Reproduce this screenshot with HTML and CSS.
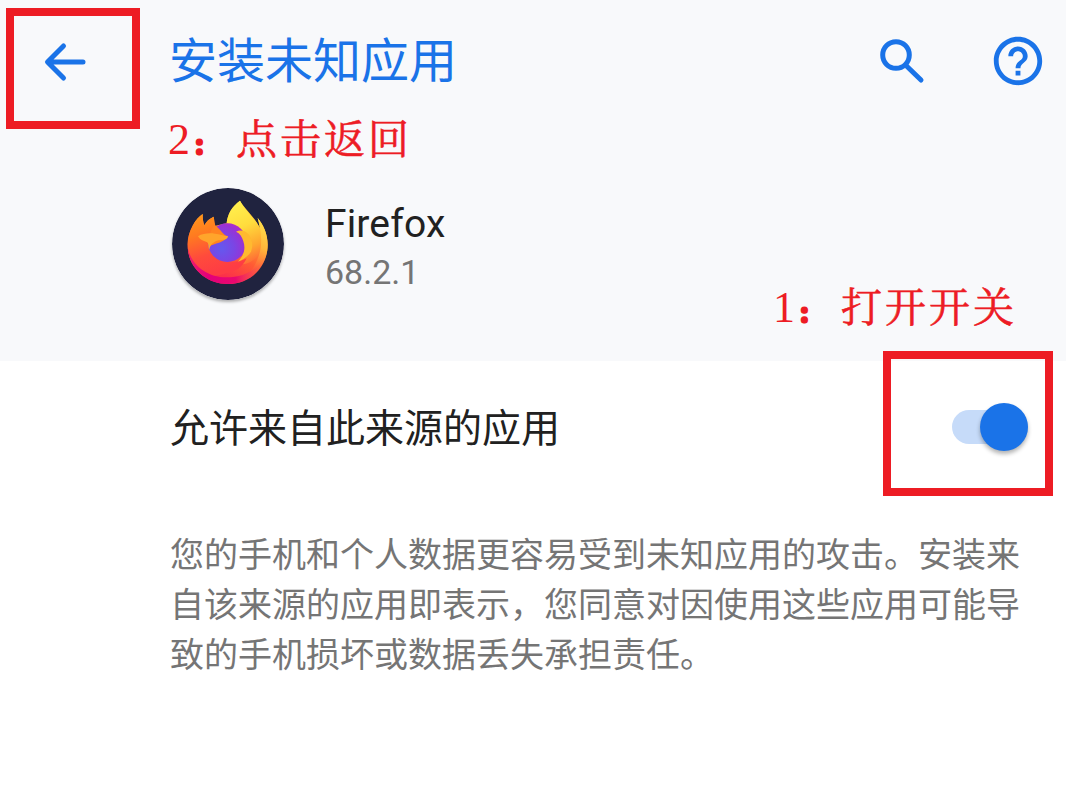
FILE: index.html
```html
<!DOCTYPE html>
<html lang="zh-CN">
<head>
<meta charset="utf-8">
<title>安装未知应用</title>
<link rel="stylesheet" href="styles.css">
</head>
<body>
<div class="screen">
  <header class="header">
    <div class="toolbar">
      <svg class="back" viewBox="0 0 48 48"><path d="M41 25H6.500M21.500 9L5.500 25L21.500 41"/></svg>
      <h1 class="title">安装未知应用</h1>
      <svg class="search" viewBox="0 0 48 48"><circle cx="18" cy="18" r="13.300"/><path class="handle" d="M28 28.500L43 43"/></svg>
      <svg class="help" viewBox="0 0 24 24"><path d="M11 18h2v-2h-2v2zm1-16C6.480 2 2 6.480 2 12s4.480 10 10 10 10-4.480 10-10S17.520 2 12 2zm0 18c-4.410 0-8-3.590-8-8s3.590-8 8-8 8 3.590 8 8-3.590 8-8 8zm0-14c-2.210 0-4 1.790-4 4h2c0-1.100.9-2 2-2s2 .9 2 2c0 2-3 1.750-3 5h2c0-2.250 3-2.500 3-5 0-2.210-1.790-4-4-4z"/></svg>
    </div>
    <div class="app">
      <svg class="app-icon" viewBox="36 24 336 336">
        <defs>
          <linearGradient id="body" x1="0.750" y1="0.050" x2="0.300" y2="1">
            <stop offset="0" stop-color="#ffd13a"/><stop offset="0.300" stop-color="#ffa42c"/><stop offset="0.600" stop-color="#ff5a35"/><stop offset="0.850" stop-color="#fb3149"/><stop offset="1" stop-color="#fb3149"/>
          </linearGradient>
          <linearGradient id="flame" x1="0.350" y1="0" x2="0.600" y2="1">
            <stop offset="0" stop-color="#fff04e"/><stop offset="0.400" stop-color="#ffdc3d"/><stop offset="0.750" stop-color="#ffa52f"/><stop offset="1" stop-color="#ff6937"/>
          </linearGradient>
          <linearGradient id="rim" x1="0.500" y1="0" x2="0.300" y2="1">
            <stop offset="0" stop-color="#ffe04a"/><stop offset="0.450" stop-color="#ffb53a"/><stop offset="1" stop-color="#ff5540" stop-opacity="0"/>
          </linearGradient>
          <linearGradient id="face" x1="0" y1="0" x2="0.300" y2="1">
            <stop offset="0" stop-color="#ff9c18"/><stop offset="0.350" stop-color="#ff7b20"/><stop offset="0.700" stop-color="#ff4b3c"/><stop offset="1" stop-color="#fe3c44"/>
          </linearGradient>
          <linearGradient id="base" gradientUnits="userSpaceOnUse" x1="83" y1="0" x2="323" y2="0">
            <stop offset="0" stop-color="#f0206a"/><stop offset="0.250" stop-color="#e3007b"/><stop offset="0.600" stop-color="#e8086f"/><stop offset="1" stop-color="#ff7a40" stop-opacity="0"/>
          </linearGradient>
          <radialGradient id="globe" cx="0.350" cy="0.650" r="0.750">
            <stop offset="0" stop-color="#6459ee"/><stop offset="0.450" stop-color="#7b45e4"/><stop offset="0.800" stop-color="#9a31d3"/><stop offset="1" stop-color="#b62ac6"/>
          </radialGradient>
        </defs>
        <circle cx="204" cy="192" r="168" fill="#20233f"/>
        <path d="M128 102C108 114 83 153 83 193C83 262 137 312 204 312C271 312 323 261 323 194C323 162 309 132 293 114C297 125 299 134 299 144C285 110 258 93 240 62C216 79 202 103 200 130L162 138L161 110C148 116 139 124 133 136C129 126 128 114 128 102Z" fill="url(#body)"/>
        <path d="M240 62C216 79 202 103 200 130C225 133 244 143 253 159C275 165 282 196 270 215C259 235 245 245 224 252C260 259 288 242 304 211C312 196 313 177 307 160C295 122 257 97 240 62Z" fill="url(#flame)"/>
        <path d="M293 114C309 132 323 162 323 194C323 244 294 279 258 292C294 250 306 211 303 171C303 150 296 131 293 114Z" fill="url(#rim)"/>
        <path d="M128 102C108 114 83 153 83 193C83 230 98 260 121 279C145 291 177 289 198 279C226 278 247 262 260 235C247 243 225 248 199 246C170 242 151 227 149 202L166 137L161 110C148 116 139 124 133 136C129 126 128 114 128 102Z" fill="url(#face)"/>
        <circle cx="202" cy="188" r="58" fill="url(#globe)"/>
        <path d="M162 134L140 180L149 200C155 193 166 192 177 188C188 184 201 178 204 168C188 167 185 148 162 134Z" fill="#ff8420"/>
        <path d="M83 200C91 253 139 292 199 292C257 292 304 266 322 209C316 270 267 312 204 312C137 312 84 262 83 200Z" fill="url(#base)"/>
        <path d="M114 169C130 158 151 159 165 161C179 163 191 167 204 169C202 180 188 180 176 181C161 184 150 195 148 209C143 199 148 190 140 186C129 183 120 179 114 169Z" fill="#ffa52b"/>
        <path d="M228 155C236 151 244 151 254 154C275 166 282 192 273 215C264 230 248 240 234 245C253 225 257 205 250 184C246 171 240 160 228 155Z" fill="#ffb930"/>
      </svg>
      <div class="app-text">
        <div class="app-name">Firefox</div>
        <div class="app-version">68.2.1</div>
      </div>
    </div>
  </header>
  <main class="content">
    <div class="setting">
      <span class="setting-label">允许来自此来源的应用</span>
      <span class="switch"><span class="thumb"></span></span>
    </div>
    <p class="notice">您的手机和个人数据更容易受到未知应用的攻击。安装来<br>自该来源的应用即表示，您同意对因使用这些应用可能导<br>致的手机损坏或数据丢失承担责任。</p>
  </main>
  <div class="mark mark-back"></div>
  <div class="mark mark-switch"></div>
  <div class="note note-back"><span class="step">2</span><span class="colon">：</span>点击返回</div>
  <div class="note note-switch"><span class="step">1</span><span class="colon">：</span>打开开关</div>
</div>
</body>
</html>
```
FILE: styles.css
```css
body {
  margin: 0;
  background: #fff;
  font-family: Roboto, "Noto Sans CJK SC", sans-serif;
}
.screen {
  position: relative;
  width: 1066px;
  height: 795px;
  overflow: hidden;
}
.header {
  box-sizing: border-box;
  height: 361px;
  background: #f8f9fb;
}
.toolbar {
  display: flex;
  align-items: center;
  height: 122px;
  padding: 0 19px 0 41px;
}
.back {
  width: 48px;
  height: 48px;
  margin-left: 1px;
  fill: none;
  stroke: #1a73e8;
  stroke-width: 5;
  stroke-linecap: round;
  stroke-linejoin: round;
}
.title {
  flex: 1;
  margin: 2px 0 0 79px;
  font-size: 48px;
  line-height: 70px;
  font-weight: 400;
  color: #1a73e8;
}
.search {
  width: 48px;
  height: 48px;
  margin-right: 63px;
  fill: none;
  stroke: #1a73e8;
  stroke-width: 5;
}
.handle {
  stroke-linecap: round;
}
.help {
  width: 58px;
  height: 58px;
  fill: #1a73e8;
}
.app {
  display: flex;
  gap: 41px;
  padding: 66px 0 0 172px;
}
.app-icon {
  width: 112px;
  height: 112px;
  border-radius: 50%;
  box-shadow: 0 2px 3px rgba(0, 0, 0, 0.3);
}
.app-name {
  padding-top: 12px;
  font-size: 39px;
  line-height: 48px;
  letter-spacing: 0.150px;
  color: #212121;
}
.app-version {
  font-size: 34px;
  line-height: 48px;
  color: #757575;
}
.content {
  padding: 0 38px 0 170px;
}
.setting {
  display: flex;
  align-items: center;
  justify-content: space-between;
  height: 131px;
}
.setting-label {
  padding-top: 4px;
  font-size: 39px;
  line-height: 58px;
  color: #212121;
}
.switch {
  display: flex;
  align-items: center;
  justify-content: flex-end;
  width: 76px;
  height: 34px;
  border-radius: 17px;
  background: #c6dbf9;
}
.thumb {
  flex: none;
  width: 48px;
  height: 48px;
  border-radius: 50%;
  background: #1a73e8;
  box-shadow: 0 3px 4px rgba(0, 0, 0, 0.3);
}
.notice {
  margin: 38px 0 0;
  font-size: 34px;
  line-height: 50px;
  white-space: nowrap;
  color: #757575;
}
.mark {
  position: absolute;
  box-sizing: border-box;
  border: 8px solid #ed1c24;
}
.mark-back {
  left: 6px;
  top: 8px;
  width: 134px;
  height: 121px;
}
.mark-switch {
  left: 883px;
  top: 351px;
  width: 170px;
  height: 145px;
}
.note {
  position: absolute;
  display: flex;
  align-items: baseline;
  font-family: "Noto Serif CJK SC", "Noto Sans CJK SC", serif;
  font-size: 41px;
  line-height: 60px;
  letter-spacing: 3px;
  white-space: nowrap;
  color: #ed1c24;
  -webkit-text-stroke: 0.6px #ed1c24;
}
.step {
  width: 22px;
  font-family: "Liberation Serif", serif;
  font-size: 44px;
  letter-spacing: 0;
  -webkit-text-stroke: 0;
}
.colon {
  box-sizing: border-box;
  width: 46px;
  padding-left: 3px;
  font-size: 24px;
  font-weight: 700;
  -webkit-text-stroke: 3px #ed1c24;
}
.note-back {
  left: 168px;
  top: 107px;
}
.note-switch {
  left: 773px;
  top: 275px;
}
```
